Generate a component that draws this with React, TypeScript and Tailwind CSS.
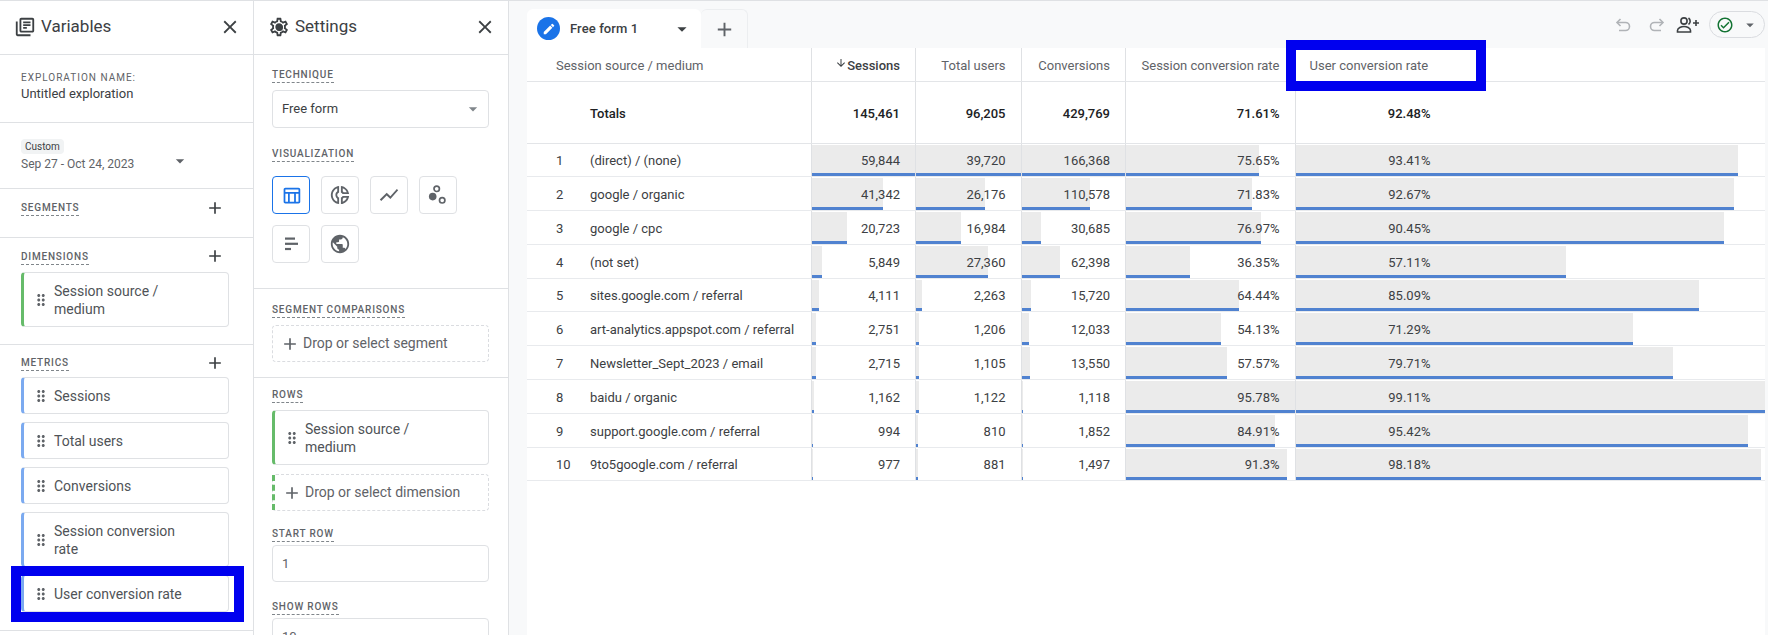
import {
  MdOutlineLibraryBooks,
  MdOutlineSettings,
  MdClose,
  MdAdd,
  MdArrowDropDown,
  MdDragIndicator,
  MdOutlineTableChart,
  MdOutlineDonutSmall,
  MdShowChart,
  MdPublic,
  MdEdit,
  MdOutlineCheckCircle,
  MdArrowDownward,
} from "react-icons/md";

const rows = [
  ["(direct) / (none)", 59844, 39720, 166368, 75.65, 93.41],
  ["google / organic", 41342, 26176, 110578, 71.83, 92.67],
  ["google / cpc", 20723, 16984, 30685, 76.97, 90.45],
  ["(not set)", 5849, 27360, 62398, 36.35, 57.11],
  ["sites.google.com / referral", 4111, 2263, 15720, 64.44, 85.09],
  ["art-analytics.appspot.com / referral", 2751, 1206, 12033, 54.13, 71.29],
  ["Newsletter_Sept_2023 / email", 2715, 1105, 13550, 57.57, 79.71],
  ["baidu / organic", 1162, 1122, 1118, 95.78, 99.11],
  ["support.google.com / referral", 994, 810, 1852, 84.91, 95.42],
  ["9to5google.com / referral", 977, 881, 1497, 91.3, 98.18],
] as [string, number, number, number, number, number][];

const gridCols = "grid grid-cols-[283.5px_104.5px_105.5px_104.5px_169.5px_470.5px]";

function SectionLabel({ children }: { children: string }) {
  return (
    <span className="block w-fit border-b border-dashed border-[#80868b] text-[10px] leading-[14px] font-medium uppercase tracking-[0.8px] text-[#5f6368]">
      {children}
    </span>
  );
}

function PanelHeader({ icon, title }: { icon: React.ReactNode; title: string }) {
  return (
    <div className="flex h-[54px] shrink-0 items-center border-b border-[#dfe1e4] pb-[1px] pl-[14px] pr-[12px]">
      {icon}
      <span className="ml-[5px] text-[17px] text-[#3c4043]">{title}</span>
      <MdClose className="ml-auto text-[#3c4043]" size={22} />
    </div>
  );
}

function Chip({
  label,
  color,
  tall = false,
}: {
  label: string;
  color: string;
  tall?: boolean;
}) {
  return (
    <div
      className={`flex items-center rounded border border-[#dfe1e4] border-l-[3px] pr-8 text-[14px] leading-[18px] text-[#4f5357] ${color} ${
        tall ? "h-[55px]" : "h-[37px]"
      }`}
    >
      <MdDragIndicator className="ml-[8px] mr-[4px] shrink-0 text-[#5f6368]" size={18} />
      <span>{label}</span>
    </div>
  );
}

function DropBox({ label, green = false }: { label: string; green?: boolean }) {
  return (
    <div
      className={`relative flex h-[37px] items-center rounded border border-dashed border-[#dadce0] text-[14px] text-[#5f6368] ${
        green ? "pl-[9px]" : "pl-[7px]"
      }`}
    >
      {green && (
        <div className="absolute -left-px top-0 h-full border-l-[3px] border-dashed border-[#66bb6a]" />
      )}
      <MdAdd size={20} />
      <span className="ml-[3px]">{label}</span>
    </div>
  );
}

function VariablesPanel() {
  return (
    <div className="flex w-[254px] shrink-0 flex-col border-r border-[#dfe1e4] bg-white">
      <PanelHeader
        icon={<MdOutlineLibraryBooks className="text-[#3c4043]" size={22} />}
        title="Variables"
      />
      <div className="h-[68px] shrink-0 border-b border-[#dfe1e4] pl-[21px] pt-[16px]">
        <div className="text-[10px] leading-[14px] uppercase tracking-[1px] text-[#5f6368]">
          Exploration name:
        </div>
        <div className="text-[13px] leading-[18px] text-[#3c4043]">Untitled exploration</div>
      </div>
      <div className="h-[66px] shrink-0 border-b border-[#dfe1e4] pl-[21px] pt-[16px]">
        <div className="w-fit rounded-sm bg-[#f1f3f4] px-[4px] text-[10px] leading-[15px] text-[#3c4043]">
          Custom
        </div>
        <div className="flex w-[169px] items-center text-[12px] leading-[18px] text-[#5f6368]">
          Sep 27 - Oct 24, 2023
          <MdArrowDropDown className="ml-auto -translate-y-[3px]" size={20} />
        </div>
      </div>
      <div className="flex h-[49px] shrink-0 items-start justify-between border-b border-[#dfe1e4] pl-[21px] pr-[28px] pt-[12px]">
        <SectionLabel>Segments</SectionLabel>
        <MdAdd className="-mt-[3px] text-[#3c4043]" size={20} />
      </div>
      <div className="h-[107px] shrink-0 border-b border-[#dfe1e4] pl-[21px] pr-[24px] pt-[12px]">
        <div className="flex items-start justify-between pr-[4px]">
          <SectionLabel>Dimensions</SectionLabel>
          <MdAdd className="-mt-[4px] text-[#3c4043]" size={20} />
        </div>
        <div className="mt-[6px]">
          <Chip label="Session source / medium" color="border-l-[#66bb6a]" tall />
        </div>
      </div>
      <div className="relative h-[286px] shrink-0 border-b border-[#dfe1e4] pl-[21px] pr-[24px] pt-[11px]">
        <div className="flex items-start justify-between pr-[4px]">
          <SectionLabel>Metrics</SectionLabel>
          <MdAdd className="-mt-[3px] text-[#3c4043]" size={20} />
        </div>
        <div className="mt-[4px] flex flex-col gap-2">
          <Chip label="Sessions" color="border-l-[#7baaf0]" />
          <Chip label="Total users" color="border-l-[#7baaf0]" />
          <Chip label="Conversions" color="border-l-[#7baaf0]" />
          <Chip label="Session conversion rate" color="border-l-[#7baaf0]" tall />
          <div className="relative">
            <Chip label="User conversion rate" color="border-l-[#7baaf0]" />
            <div className="absolute -left-[10px] -right-[15px] -top-[9px] h-[56px] border-[10px] border-[#0000ef]" />
          </div>
        </div>
      </div>
    </div>
  );
}

function VizButton({ children, active = false }: { children: React.ReactNode; active?: boolean }) {
  return (
    <div
      className={`flex h-[38px] w-[38px] items-center justify-center rounded border ${
        active ? "border-[#1a73e8] text-[#1a73e8]" : "border-[#dfe1e4] text-[#5f6368]"
      }`}
    >
      {children}
    </div>
  );
}

function SettingsPanel() {
  return (
    <div className="flex w-[255px] shrink-0 flex-col border-r border-[#dfe1e4] bg-white">
      <PanelHeader
        icon={
          <div className="relative h-[22px] w-[22px] text-[#3c4043]">
            <MdOutlineSettings size={22} />
            <div className="absolute left-[7.5px] top-[7.5px] h-[7px] w-[7px] rounded-full bg-[#3c4043]" />
          </div>
        }
        title="Settings"
      />
      <div className="h-[234px] shrink-0 border-b border-[#dfe1e4] pl-[18px] pr-[19px] pt-[13px]">
        <SectionLabel>Technique</SectionLabel>
        <div className="mt-[7px] flex h-[38px] items-center justify-between rounded border border-[#dfe1e4] pl-[9px] pr-[5px] text-[13px] text-[#3c4043]">
          Free form
          <MdArrowDropDown className="text-[#80868b]" size={20} />
        </div>
        <div className="mt-[19px]">
          <SectionLabel>Visualization</SectionLabel>
        </div>
        <div className="mt-[14px] flex w-[190px] flex-wrap gap-x-[11px] gap-y-[11px]">
          <VizButton active>
            <MdOutlineTableChart size={21} />
          </VizButton>
          <VizButton>
            <MdOutlineDonutSmall size={22} />
          </VizButton>
          <VizButton>
            <MdShowChart size={22} />
          </VizButton>
          <VizButton>
            <svg width="24" height="24" viewBox="0 0 24 24" fill="none" stroke="currentColor" strokeWidth="1.7">
              <circle cx="6.7" cy="13.6" r="3.8" fill="currentColor" stroke="none" />
              <circle cx="10.7" cy="5.8" r="2.7" />
              <circle cx="16.2" cy="17.3" r="2.7" />
            </svg>
          </VizButton>
          <VizButton>
            <svg width="20" height="20" viewBox="0 0 20 20" fill="currentColor">
              <rect x="4" y="3.5" width="10" height="2.2" />
              <rect x="4" y="8.7" width="13" height="2.2" />
              <rect x="4" y="13.9" width="6" height="2.2" />
            </svg>
          </VizButton>
          <VizButton>
            <MdPublic size={22} />
          </VizButton>
        </div>
      </div>
      <div className="h-[89px] shrink-0 border-b border-[#dfe1e4] pl-[18px] pr-[19px] pt-[14px]">
        <SectionLabel>Segment comparisons</SectionLabel>
        <div className="mt-[7px]">
          <DropBox label="Drop or select segment" />
        </div>
      </div>
      <div className="flex-1 overflow-hidden pl-[18px] pr-[19px] pt-[10px]">
        <SectionLabel>Rows</SectionLabel>
        <div className="mt-[7px]">
          <Chip label="Session source / medium" color="border-l-[#66bb6a]" tall />
        </div>
        <div className="mt-[9px]">
          <DropBox label="Drop or select dimension" green />
        </div>
        <div className="mt-[16px]">
          <SectionLabel>Start row</SectionLabel>
        </div>
        <div className="mt-[3px] flex h-[37px] items-center rounded border border-[#dfe1e4] pl-[9px] text-[13px] text-[#5f6368]">
          1
        </div>
        <div className="mt-[18px]">
          <SectionLabel>Show rows</SectionLabel>
        </div>
        <div className="mt-[3px] flex h-[37px] items-center rounded border border-[#dfe1e4] pl-[9px] text-[13px] text-[#5f6368]">
          10
        </div>
      </div>
    </div>
  );
}

function HeaderCell({
  label,
  right = true,
  bold = false,
  first = false,
}: {
  label: string;
  right?: boolean;
  bold?: boolean;
  first?: boolean;
}) {
  return (
    <div
      className={`flex items-center whitespace-nowrap pt-[2px] ${
        first ? "pl-[29px]" : "border-l border-[#dfe1e4] pr-[15px]"
      } ${right ? "justify-end" : ""} ${bold ? "font-medium text-[#3c4043]" : "text-[#5f6368]"}`}
    >
      {bold && <MdArrowDownward className="-translate-y-[2px]" size={12} />}
      {label}
    </div>
  );
}

function BarCell({
  value,
  max,
  text,
  wide = false,
}: {
  value: number;
  max: number;
  text: string;
  wide?: boolean;
}) {
  return (
    <div className="relative border-l border-[#dfe1e4]">
      <div
        className="absolute bottom-0 left-0 top-[1px] border-b-[3px] border-[#5082d0] bg-[#ebebeb]"
        style={{ width: `${(value / max) * 100}%` }}
      />
      <div className={`relative flex h-full items-center justify-end pt-[2px] ${wide ? "w-[135px]" : "pr-[15px]"}`}>
        {text}
      </div>
    </div>
  );
}

function DataTable() {
  return (
    <div className="min-h-0 flex-1 bg-white text-[13px] text-[#3c4043]">
      <div className={`${gridCols} h-[33.5px] border-b border-[#e3e5e8]`}>
        <HeaderCell label="Session source / medium" right={false} first />
        <HeaderCell label="Sessions" bold />
        <HeaderCell label="Total users" />
        <HeaderCell label="Conversions" />
        <HeaderCell label="Session conversion rate" />
        <div className="relative flex items-center border-l border-[#dfe1e4] pl-[14px] pt-[2px] text-[#5f6368]">
          User conversion rate
          <div className="absolute -left-[10px] -top-[8px] h-[51px] w-[200px] border-[10px] border-[#0000ef]" />
        </div>
      </div>
      <div className={`${gridCols} h-[62px] border-b border-[#e3e5e8] font-medium text-[#202124]`}>
        <div className="flex items-center pl-[63px] pt-[4px]">Totals</div>
        {["145,461", "96,205", "429,769", "71.61%"].map((t) => (
          <div key={t} className="flex items-center justify-end border-l border-[#dfe1e4] pr-[15px] pt-[4px]">
            {t}
          </div>
        ))}
        <div className="border-l border-[#dfe1e4]">
          <div className="flex h-full w-[135px] items-center justify-end pt-[4px]">92.48%</div>
        </div>
      </div>
      {rows.map((r, i) => (
        <div key={r[0]} className={`${gridCols} h-[33.8px] border-b border-[#e8eaed]`}>
          <div className="flex items-center pl-[29px] pt-[2px]">
            <span className="w-[34px]">{i + 1}</span>
            <span>{r[0]}</span>
          </div>
          <BarCell value={r[1]} max={59844} text={r[1].toLocaleString("en-US")} />
          <BarCell value={r[2]} max={39720} text={r[2].toLocaleString("en-US")} />
          <BarCell value={r[3]} max={166368} text={r[3].toLocaleString("en-US")} />
          <BarCell value={r[4]} max={95.78} text={`${r[4]}%`} />
          <BarCell value={r[5]} max={99.11} text={`${r[5]}%`} wide />
        </div>
      ))}
    </div>
  );
}

function Toolbar() {
  return (
    <div className="ml-auto flex items-center self-start pt-[10px]">
      <svg width="16" height="16" viewBox="0 0 16 16" fill="none" stroke="#b0b3b7" strokeWidth="1.6">
        <path d="M5.5 2 2 5.5 5.5 9" />
        <path d="M2.5 5.5H10.5a3.5 3.5 0 0 1 0 8H4" />
      </svg>
      <svg className="ml-[18px]" width="16" height="16" viewBox="0 0 16 16" fill="none" stroke="#b0b3b7" strokeWidth="1.6">
        <path d="M10.5 2 14 5.5 10.5 9" />
        <path d="M13.5 5.5H5.5a3.5 3.5 0 0 0 0 8H12" />
      </svg>
      <svg className="ml-[11px]" width="24" height="16" viewBox="0 0 24 16" fill="none" stroke="#3c4043" strokeWidth="1.6">
        <circle cx="8" cy="4" r="3.1" />
        <path d="M1.5 15v-1.5c0-2.5 4-4 6.5-4s6.5 1.5 6.5 4V15z" />
        <path d="M12.5 1a4 4 0 0 1 0 6.5" />
        <path d="M17 6h6M20 3v6" />
      </svg>
      <div className="ml-[9px] flex h-[27px] w-[56px] items-center rounded-full border border-[#dadce0] pl-[6px]">
        <MdOutlineCheckCircle className="text-[#137333]" size={18} />
        <MdArrowDropDown className="ml-[7px] text-[#5f6368]" size={18} />
      </div>
    </div>
  );
}

export default function App() {
  return (
    <div className="flex h-[635px] w-[1768px] overflow-hidden border-t border-[#dfe1e4] bg-[#f8f9fa] font-['Roboto',sans-serif]">
      <VariablesPanel />
      <SettingsPanel />
      <div className="flex min-w-0 flex-1 flex-col pl-[18px] pr-[3px]">
        <div className="flex h-[47px] shrink-0 items-end">
          <div className="flex h-[39px] w-[174px] items-center rounded-t-md bg-white pl-[10px] pr-[8px]">
            <div className="flex h-[23px] w-[23px] items-center justify-center rounded-full bg-[#1a73e8] text-white">
              <MdEdit size={14} />
            </div>
            <span className="ml-[10px] text-[13px] font-medium tracking-[0.1px] text-[#3c4043]">Free form 1</span>
            <MdArrowDropDown className="ml-auto text-[#3c4043]" size={22} />
          </div>
          <div className="flex h-[39px] w-[47px] items-center justify-center rounded-t-md border-r border-t border-[#eceef0] bg-[#f8f9fa] text-[#5f6368]">
            <MdAdd size={23} />
          </div>
          <Toolbar />
        </div>
        <DataTable />
      </div>
    </div>
  );
}
